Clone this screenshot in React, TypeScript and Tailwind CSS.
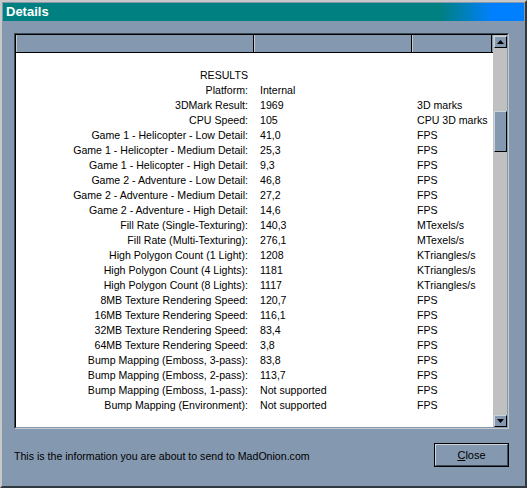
import React from "react";

type Row = [string, string, string];

const rows: Row[] = [
  ["RESULTS", "", ""],
  ["Platform:", "Internal", ""],
  ["3DMark Result:", "1969", "3D marks"],
  ["CPU Speed:", "105", "CPU 3D marks"],
  ["Game 1 - Helicopter - Low Detail:", "41,0", "FPS"],
  ["Game 1 - Helicopter - Medium Detail:", "25,3", "FPS"],
  ["Game 1 - Helicopter - High Detail:", "9,3", "FPS"],
  ["Game 2 - Adventure - Low Detail:", "46,8", "FPS"],
  ["Game 2 - Adventure - Medium Detail:", "27,2", "FPS"],
  ["Game 2 - Adventure - High Detail:", "14,6", "FPS"],
  ["Fill Rate (Single-Texturing):", "140,3", "MTexels/s"],
  ["Fill Rate (Multi-Texturing):", "276,1", "MTexels/s"],
  ["High Polygon Count (1 Light):", "1208", "KTriangles/s"],
  ["High Polygon Count (4 Lights):", "1181", "KTriangles/s"],
  ["High Polygon Count (8 Lights):", "1117", "KTriangles/s"],
  ["8MB Texture Rendering Speed:", "120,7", "FPS"],
  ["16MB Texture Rendering Speed:", "116,1", "FPS"],
  ["32MB Texture Rendering Speed:", "83,4", "FPS"],
  ["64MB Texture Rendering Speed:", "3,8", "FPS"],
  ["Bump Mapping (Emboss, 3-pass):", "83,8", "FPS"],
  ["Bump Mapping (Emboss, 2-pass):", "113,7", "FPS"],
  ["Bump Mapping (Emboss, 1-pass):", "Not supported", "FPS"],
  ["Bump Mapping (Environment):", "Not supported", "FPS"],
];

function Arrow({ up }: { up?: boolean }) {
  return (
    <div className="flex h-[12px] w-[13px] items-center justify-center border-t border-l border-[#c8d4e0] border-r border-b border-r-black border-b-black bg-[#8498b0]">
      <svg width="7" height="4" viewBox="0 0 7 4">
        {up ? <path d="M3.5 0 L7 4 L0 4 Z" fill="#000" /> : <path d="M0 0 L7 0 L3.5 4 Z" fill="#000" />}
      </svg>
    </div>
  );
}

export default function App() {
  return (
    <div className="h-[488px] w-[527px] overflow-hidden font-['Liberation_Sans',Arial,sans-serif] text-[10.6px] text-black">
      <div className="flex h-full w-full flex-col border-t-2 border-l-2 border-[#c8c8c8] border-r-2 border-b-2 border-r-[#303840] border-b-[#303840] bg-[#8498b0] p-px">
        {/* title */}
        <div className="flex h-[18px] items-center bg-[linear-gradient(90deg,#008080_84%,#0080ff_94%)] pl-[3px] text-[13px] font-bold text-white">
          Details
        </div>

        <div className="pl-[11px] pt-3">
          <div className="h-[396px] w-[495px] border-t border-l border-[#3c4a58] border-r border-b border-r-[#c8c8c8] border-b-[#c8c8c8]">
            <div className="flex h-full border-t border-l border-black border-r border-b border-r-[#8498b0] border-b-[#8498b0]">
              {/* table */}
              <div className="flex w-[477px] flex-col bg-white">
                <div className="flex h-[18px] border-b border-black bg-[#8498b0]">
                  <div className="w-[238px] border-l border-[#c8c8c8] border-r border-r-black" />
                  <div className="w-[158px] border-l border-[#c8c8c8] border-r border-r-black" />
                  <div className="w-[80px] border-l border-[#c8c8c8] border-r border-r-black" />
                </div>
                <div className="pt-[15px]">
                  {rows.map(([label, value, unit]) => (
                    <div key={label} className="flex h-[15px] leading-[15px]">
                      <div className="w-[238px] pr-[6px] text-right whitespace-nowrap">{label}</div>
                      <div className="w-[158px] pl-[6px] whitespace-nowrap">{value}</div>
                      <div className="flex-1 pl-[5px] whitespace-nowrap">{unit}</div>
                    </div>
                  ))}
                </div>
              </div>
              {/* scrollbar */}
              <div className="flex w-[14px] flex-col bg-[#c0c0c0] pl-px pt-px">
                <Arrow up />
                <div className="mt-[63px] h-[41px] w-[13px] border-t border-l border-[#c8d4e0] border-r border-b border-r-black border-b-black bg-[#8498b0]" />
                <div className="flex-1" />
                <Arrow />
              </div>
            </div>
          </div>
        </div>

        <div className="mt-[14px] flex h-[24px] items-center justify-between pl-[11px] pr-[15px]">
          <span className="pt-[3px]">This is the information you are about to send to MadOnion.com</span>
          <button className="h-[24px] w-[75px] border border-black bg-[#8498b0] p-0">
            <div className="flex h-full w-full items-center justify-center border-t border-l border-[#c8d4e0] border-r border-b border-r-[#3c4a58] border-b-[#3c4a58] text-[11px]">
              <span>
                <span className="underline">C</span>lose
              </span>
            </div>
          </button>
        </div>
      </div>
    </div>
  );
}
